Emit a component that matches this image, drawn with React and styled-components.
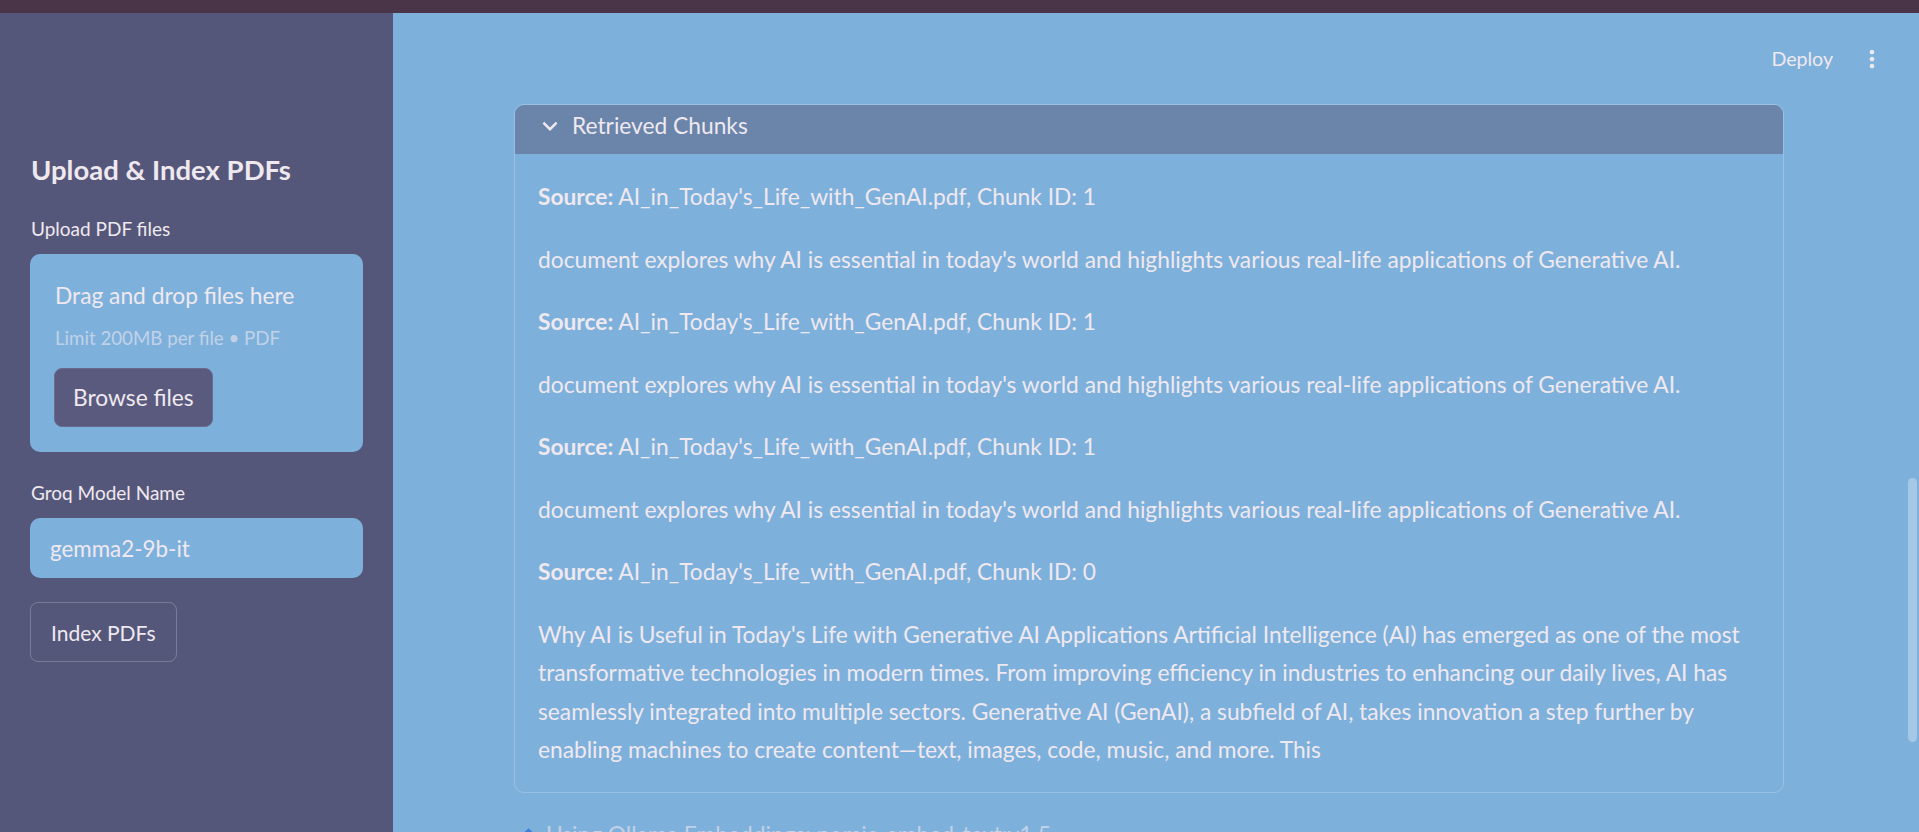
import React from 'react';
import styled, { createGlobalStyle } from 'styled-components';
import { MdExpandMore, MdMoreVert } from 'react-icons/md';

const FONT = `"Lato", "Liberation Sans", sans-serif`;
const TEXT = '#efe9ef';
const BODY_SIZE = '22.75px';

const GlobalStyle = createGlobalStyle`
    html, body {
        margin: 0;
        padding: 0;
        height: 100%;
        overflow: hidden;
        font-family: ${FONT};
    }
    * { box-sizing: border-box; }
`;

const Shell = styled.div`
    display: flex;
    flex-direction: column;
    height: 100vh;
    color: ${TEXT};
`;

const TopStrip = styled.div`
    height: 13px;
    flex-shrink: 0;
    background: #4a3447;
`;

const Body = styled.div`
    display: flex;
    flex: 1;
    min-height: 0;
`;

const Sidebar = styled.aside`
    width: 393px;
    flex-shrink: 0;
    background: #55577a;
    padding: 139px 30px 0 30px;
    display: flex;
    flex-direction: column;
`;

const SideTitle = styled.h2`
    margin: 0 0 27px 1px;
    font-size: 27.5px;
    font-weight: 700;
    line-height: 36px;
`;

const FieldLabel = styled.div`
    font-size: 19px;
    line-height: 28px;
    margin: 0 0 11px 1px;
`;

const DropZone = styled.div`
    background: #7eb0dc;
    border-radius: 10px;
    padding: 24px 24px 25px 24px;
    display: flex;
    flex-direction: column;
    align-items: flex-start;
    margin-bottom: 27px;
`;

const DropTitle = styled.div`
    font-size: ${BODY_SIZE};
    line-height: 36px;
    margin-left: 1px;
`;

const DropHint = styled.div`
    font-size: 18.7px;
    line-height: 36px;
    margin: 6px 0 12px 1px;
    color: #c1d2e7;
`;

const Button = styled.button`
    font-family: ${FONT};
    font-size: ${p => p.$size || BODY_SIZE};
    color: ${TEXT};
    height: ${p => p.$height || 59}px;
    padding: 0 ${p => p.$pad || 19}px;
    border-radius: 8px;
    cursor: pointer;
    background: ${p => (p.$filled ? '#5a5a7e' : 'transparent')};
    border: 1px solid ${p => (p.$filled ? '#6a6a90' : 'rgba(255, 255, 255, 0.22)')};
`;

const TextInput = styled.div`
    height: 60px;
    background: #7eb0dc;
    border-radius: 10px;
    display: flex;
    align-items: center;
    padding-left: 20px;
    font-size: 22.4px;
    margin-bottom: 24px;
`;

const SideActions = styled.div`
    display: flex;
`;

const Main = styled.main`
    flex: 1;
    position: relative;
    background: #7eb0dc;
    overflow: hidden;
    display: flex;
    flex-direction: column;
`;

const Header = styled.header`
    height: 91px;
    flex-shrink: 0;
    display: flex;
    align-items: center;
    justify-content: flex-end;
    padding-right: 33px;
    gap: 25px;
`;

const Deploy = styled.span`
    font-size: 19.6px;
`;

const MenuIcon = styled(MdMoreVert)`
    width: 28px;
    height: 28px;
`;

const Content = styled.div`
    padding: 0 135px 0 121px;
`;

const Expander = styled.section`
    border: 1px solid rgba(255, 255, 255, 0.22);
    border-radius: 10px;
    overflow: hidden;
`;

const ExpanderHeader = styled.div`
    height: 49px;
    background: #6a84aa;
    display: flex;
    align-items: center;
    padding: 0 0 8px 20px;
    gap: 7px;
    font-size: ${BODY_SIZE};
`;

const Chevron = styled(MdExpandMore)`
    width: 30px;
    height: 30px;
`;

const ExpanderBody = styled.div`
    padding: 24px 23px 22px 23px;
`;

const Para = styled.p`
    margin: 0 0 24px 0;
    font-size: ${BODY_SIZE};
    line-height: 38.5px;

    &:last-child {
        margin-bottom: 0;
    }

    b {
        font-weight: 700;
    }
`;

const Caption = styled.div`
    margin-top: 23px;
    display: flex;
    align-items: center;
    gap: 13px;
    padding-left: 10px;
    font-size: ${BODY_SIZE};
    line-height: 38px;
    color: rgba(239, 233, 239, 0.6);
`;

const Diamond = styled.span`
    width: 9px;
    height: 9px;
    background: #3d7fd6;
    transform: rotate(45deg);
`;

const ScrollThumb = styled.div`
    position: absolute;
    right: 2px;
    top: 465px;
    width: 9px;
    height: 264px;
    border-radius: 5px;
    background: rgba(255, 255, 255, 0.3);
`;

const DOC = "document explores why AI is essential in today's world and highlights various real-life applications of Generative AI.";
const SOURCE = "AI_in_Today's_Life_with_GenAI.pdf";

const chunks = [
    { id: 1, text: DOC },
    { id: 1, text: DOC },
    { id: 1, text: DOC },
    {
        id: 0,
        text: "Why AI is Useful in Today's Life with Generative AI Applications Artificial Intelligence (AI) has emerged as one of the most transformative technologies in modern times. From improving efficiency in industries to enhancing our daily lives, AI has seamlessly integrated into multiple sectors. Generative AI (GenAI), a subfield of AI, takes innovation a step further by enabling machines to create content—text, images, code, music, and more. This",
    },
];

export default function App() {
    return (
        <>
            <GlobalStyle />
            <Shell>
                <TopStrip />
                <Body>
                    <Sidebar>
                        <SideTitle>Upload &amp; Index PDFs</SideTitle>
                        <FieldLabel>Upload PDF files</FieldLabel>
                        <DropZone>
                            <DropTitle>Drag and drop files here</DropTitle>
                            <DropHint>Limit 200MB per file • PDF</DropHint>
                            <Button $filled $pad={18}>Browse files</Button>
                        </DropZone>
                        <FieldLabel>Groq Model Name</FieldLabel>
                        <TextInput>gemma2-9b-it</TextInput>
                        <SideActions>
                            <Button $height={60} $size="21px" $pad={20}>Index PDFs</Button>
                        </SideActions>
                    </Sidebar>

                    <Main>
                        <Header>
                            <Deploy>Deploy</Deploy>
                            <MenuIcon />
                        </Header>
                        <Content>
                            <Expander>
                                <ExpanderHeader>
                                    <Chevron />
                                    Retrieved Chunks
                                </ExpanderHeader>
                                <ExpanderBody>
                                    {chunks.map((c, i) => (
                                        <React.Fragment key={i}>
                                            <Para>
                                                <b>Source:</b> {SOURCE}, Chunk ID: {c.id}
                                            </Para>
                                            <Para>{c.text}</Para>
                                        </React.Fragment>
                                    ))}
                                </ExpanderBody>
                            </Expander>
                            <Caption>
                                <Diamond />
                                Using Ollama Embeddings: nomic-embed-text:v1.5
                            </Caption>
                        </Content>
                        <ScrollThumb />
                    </Main>
                </Body>
            </Shell>
        </>
    );
}
